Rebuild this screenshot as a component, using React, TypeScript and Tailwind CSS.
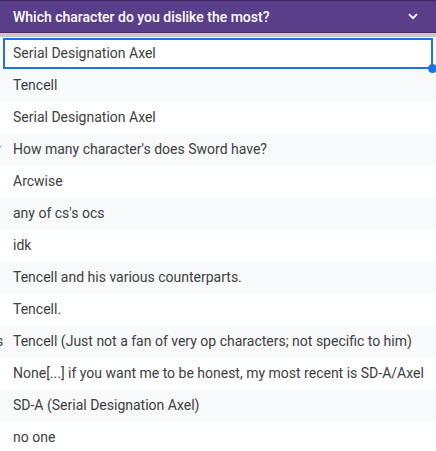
import React from "react";

const rows = [
  "Serial Designation Axel",
  "Tencell",
  "Serial Designation Axel",
  "How many character's does Sword have?",
  "Arcwise",
  "any of cs's ocs",
  "idk",
  "Tencell and his various counterparts.",
  "Tencell.",
  "Tencell (Just not a fan of very op characters; not specific to him)",
  "None[...] if you want me to be honest, my most recent is SD-A/Axel",
  "SD-A (Serial Designation Axel)",
  "no one",
];

const leftBits: Record<number, string> = { 3: "r", 9: "s" };

export default function App() {
  return (
    <div
      className="w-[436px] h-[451px] overflow-hidden bg-white"
      style={{ fontFamily: "Roboto, 'Liberation Sans', sans-serif" }}
    >
      <div className="h-[33px] bg-[#5a3e8a] border-t border-t-[#3d2a60] border-b border-b-[#45306c] flex items-center pl-[13px] pr-[16px]">
        <span className="text-white text-[14px] font-medium flex-1 leading-none">
          Which character do you dislike the most?
        </span>
        <svg width="10" height="7" viewBox="0 0 10 7" className="mr-[2px]">
          <path d="M1 1.2 L5 5.2 L9 1.2" fill="none" stroke="white" strokeWidth="1.8" />
        </svg>
      </div>
      <div className="h-[4px] bg-[#c8c8c8]" />
      <div className="flex flex-col">
        {rows.map((r, i) => {
          const bg = i % 2 === 0 ? "bg-white" : "bg-[#f8f9fa]";
          if (i === 0) {
            return (
              <div key={i} className="h-[32px] relative bg-white">
                <div className="absolute left-[3px] right-[3px] top-[1px] bottom-0 border-2 border-[#1a73e8] flex items-center pl-[8px] text-[14px] text-[#3c4043]">
                  {r}
                </div>
                <div className="absolute w-[9px] h-[9px] rounded-full bg-[#1a73e8] right-0 bottom-[-4px] translate-x-[1px] z-10" />
              </div>
            );
          }
          return (
            <div key={i} className={`h-[32px] ${bg} flex items-center relative text-[14px] text-[#3c4043]`}>
              {leftBits[i] && (
                <span className="absolute left-[-4px] text-[14px] text-[#3c4043]">{leftBits[i]}</span>
              )}
              <span className="pl-[13px] whitespace-nowrap">{r}</span>
            </div>
          );
        })}
      </div>
    </div>
  );
}
